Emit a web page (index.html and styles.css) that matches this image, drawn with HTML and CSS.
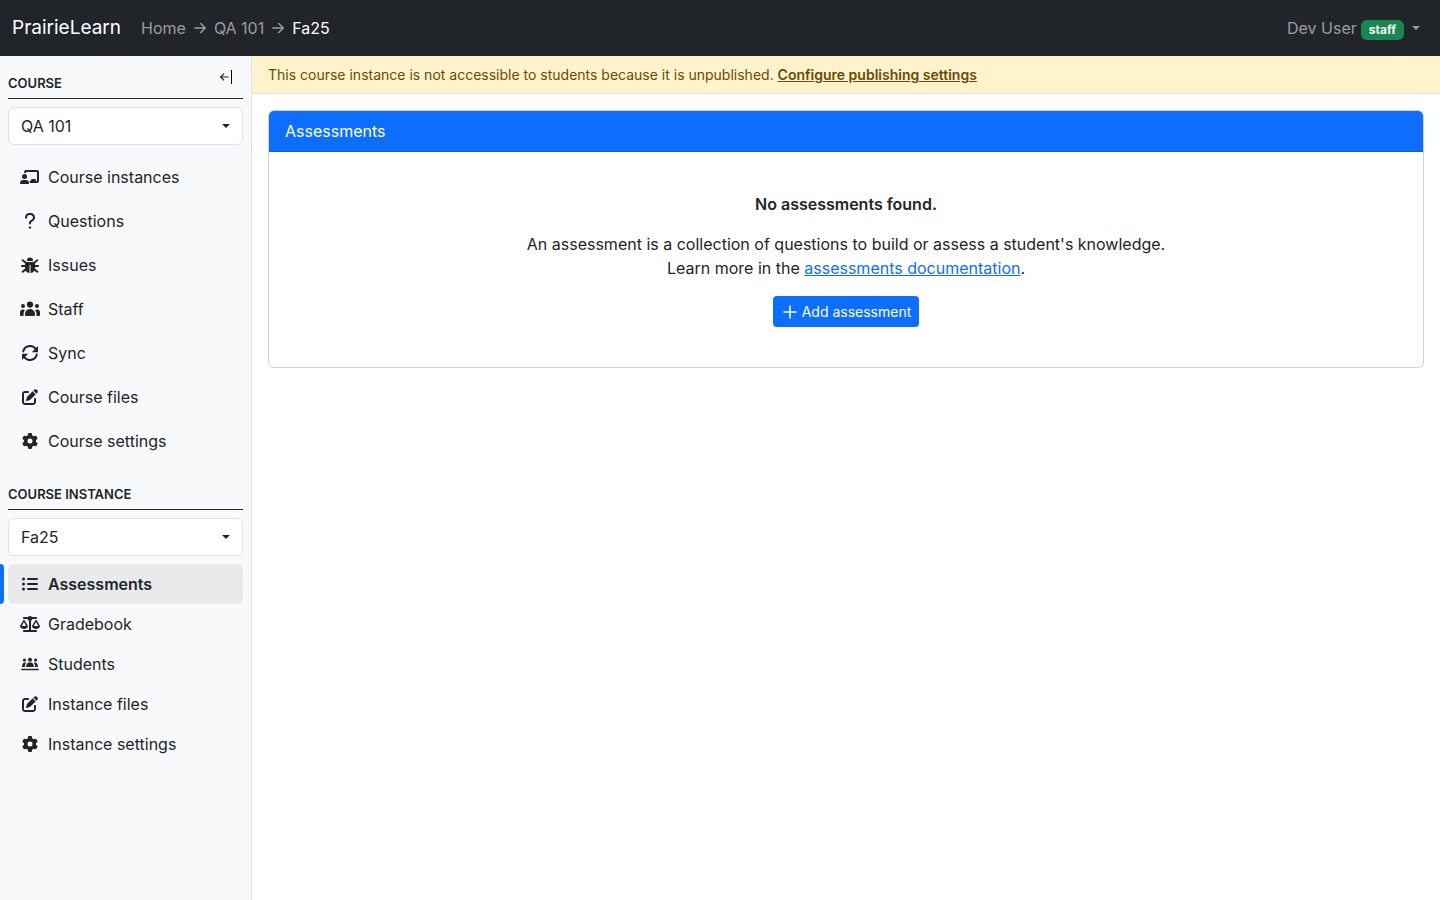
FILE: index.html
```html
<!DOCTYPE html>
<html lang="en">
<head>
<meta charset="utf-8">
<title>Assessments — Fa25, QA 101 | PrairieLearn</title>
<link rel="stylesheet" href="styles.css">
</head>
<body>
<svg class="sprite" aria-hidden="true">
  <symbol id="pen" viewBox="0 0 512 512"><path d="M471.6 21.7c-21.9-21.9-57.3-21.9-79.2 0L362.3 51.7l97.9 97.9 30.1-30.1c21.9-21.9 21.9-57.3 0-79.2L471.6 21.7zm-299.2 220c-6.1 6.1-10.8 13.6-13.5 21.9l-29.6 88.8c-2.9 8.6-.6 18.1 5.8 24.6s15.9 8.7 24.6 5.8l88.8-29.6c8.2-2.7 15.7-7.4 21.9-13.5L437.7 172.3 339.7 74.3 172.4 241.7zM96 64C43 64 0 107 0 160V416c0 53 43 96 96 96H352c53 0 96-43 96-96V320c0-17.7-14.3-32-32-32s-32 14.3-32 32v96c0 17.7-14.3 32-32 32H96c-17.7 0-32-14.3-32-32V160c0-17.7 14.3-32 32-32h96c17.7 0 32-14.3 32-32s-14.3-32-32-32H96z"/></symbol>
  <symbol id="gear" viewBox="0 0 512 512"><path d="M495.9 166.6c3.2 8.7 .5 18.4-6.4 24.6l-43.3 39.4c1.1 8.3 1.7 16.8 1.7 25.4s-.6 17.1-1.7 25.4l43.3 39.4c6.9 6.2 9.6 15.9 6.4 24.6c-4.4 11.9-9.7 23.3-15.8 34.3l-4.7 8.1c-6.6 11-14 21.4-22.1 31.2c-5.9 7.2-15.7 9.6-24.5 6.8l-55.7-17.7c-13.4 10.3-28.2 18.9-44 25.4l-12.5 57.1c-2 9.1-9 16.3-18.2 17.8c-13.8 2.3-28 3.5-42.5 3.5s-28.7-1.2-42.5-3.5c-9.2-1.5-16.2-8.7-18.2-17.8l-12.5-57.1c-15.8-6.5-30.6-15.1-44-25.4L83.1 425.9c-8.8 2.8-18.6 .3-24.5-6.8c-8.1-9.8-15.5-20.2-22.1-31.2l-4.7-8.1c-6.1-11-11.4-22.4-15.8-34.3c-3.2-8.7-.5-18.4 6.4-24.6l43.3-39.4C64.6 273.1 64 264.6 64 256s.6-17.1 1.7-25.4L22.4 191.2c-6.9-6.2-9.6-15.9-6.4-24.6c4.4-11.9 9.7-23.3 15.8-34.3l4.7-8.1c6.6-11 14-21.4 22.1-31.2c5.900-7.200 15.700-9.600 24.500-6.800l55.700 17.700c13.400-10.300 28.200-18.900 44-25.400l12.500-57.100c2-9.100 9-16.300 18.200-17.800C227.300 1.200 241.500 0 256 0s28.700 1.200 42.500 3.500c9.200 1.500 16.200 8.700 18.200 17.800l12.500 57.100c15.800 6.500 30.600 15.100 44 25.400l55.700-17.700c8.800-2.800 18.600-.3 24.500 6.800c8.100 9.800 15.500 20.200 22.100 31.200l4.700 8.100c6.100 11 11.400 22.400 15.800 34.300zM256 336a80 80 0 1 0 0-160 80 80 0 1 0 0 160z"/></symbol>
</svg>

<header class="topbar">
  <a class="brand" href="#">PrairieLearn</a>
  <nav class="crumbs" aria-label="Breadcrumb">
    <a href="#">Home</a>
    <svg class="crumb-arrow" viewBox="0 0 12 12"><path d="M.8 6h10.200M6.800 1.500 11.200 6 6.800 10.500"/></svg>
    <a href="#">QA 101</a>
    <svg class="crumb-arrow" viewBox="0 0 12 12"><path d="M.8 6h10.200M6.800 1.500 11.200 6 6.800 10.500"/></svg>
    <a class="current" href="#" aria-current="page">Fa25</a>
  </nav>
  <button class="user" type="button" aria-haspopup="true">Dev User <span class="badge">staff</span><span class="caret"></span></button>
</header>

<div class="layout">
  <aside class="sidebar">
    <div class="side-head">
      <h2 class="side-title">Course</h2>
      <button class="collapse" type="button" aria-label="Collapse side nav"><svg viewBox="0 0 14 16"><path class="thin" d="M9.500 8H2M5 4.600 1.600 8 5 11.400"/><path class="bar" d="M12.500 1v14"/></svg></button>
    </div>
    <div class="picker"><select aria-label="Course"><option>QA 101</option></select><span class="caret"></span></div>
    <nav class="menu roomy" aria-label="Course">
      <a href="#"><svg class="icon" viewBox="0 0 20 16"><circle cx="4.500" cy="7.500" r="2.500"/><path d="M3.400 11h2.200A3.400 3.400 0 0 1 9 14.400a.6.6 0 0 1-.6.6H.6a.6.6 0 0 1-.6-.6A3.400 3.400 0 0 1 3.400 11zM6 1h11a2 2 0 0 1 2 2v9a2 2 0 0 1-2 2h-6.800c-.2-.8-.6-1.400-1.200-2h2v-1a1 1 0 0 1 1-1h3a1 1 0 0 1 1 1v1h1V3H6v1.300A3.800 3.800 0 0 0 4 3.800V3a2 2 0 0 1 2-2z"/></svg>Course instances</a>
      <a href="#"><svg class="icon" viewBox="0 0 20 16"><path class="question" d="M6 4.800V4.400A3.400 3.400 0 0 1 9.400 1h1.200a3.400 3.400 0 0 1 1.900 6.200L10.800 8.400Q10 9 10 10v.6"/><circle cx="10" cy="14.600" r="1.200"/></svg>Questions</a>
      <a href="#"><svg class="icon" viewBox="0 0 20 16"><path d="M7 3.500a3 3 0 0 1 6 0 .5.500 0 0 1-.5.500h-5a.5.500 0 0 1-.5-.500z"/><path d="M7.500 5h5A2.500 2.500 0 0 1 15 7.500V11a5 5 0 0 1-4.500 4.900V8h-1v7.900A5 5 0 0 1 5 11V7.500A2.500 2.500 0 0 1 7.500 5z"/><path class="legs" d="m2.700 3.300 3.800 3M17.300 3.300l-3.800 3M2 9h4m12 0h-4M2.700 14.700l3.300-2.600M17.300 14.700 14 12.100"/></svg>Issues</a>
      <a href="#"><svg class="icon" viewBox="0 0 20 16"><circle cx="10" cy="3.600" r="3.100"/><circle cx="3" cy="5" r="2"/><circle cx="17" cy="5" r="2"/><path d="M10 8a5 5 0 0 1 5 5v1a1 1 0 0 1-1 1H6a1 1 0 0 1-1-1v-1a5 5 0 0 1 5-5zM3 8.500q1 0 1.900.5Q3.500 10.800 3.500 13v1q0 .5.200 1H1a1 1 0 0 1-1-1v-2.500a3 3 0 0 1 3-3zM17 8.500q-1 0-1.900.5 1.400 1.800 1.400 4v1q0 .5-.2 1H19a1 1 0 0 0 1-1v-2.500a3 3 0 0 0-3-3z"/></svg>Staff</a>
      <a href="#"><svg class="icon sync" viewBox="0 0 20 16"><path d="M3.200 6.500A7 7 0 0 1 15.500 3.600M16.800 9.500A7 7 0 0 1 4.500 12.400"/><path class="heads" d="M18 .9v5.600a.7.7 0 0 1-.7.700h-5.500zM2 15.100V9.500a.7.7 0 0 1 .7-.7h5.500z"/></svg>Sync</a>
      <a href="#"><svg class="icon"><use href="#pen"/></svg>Course files</a>
      <a href="#"><svg class="icon"><use href="#gear"/></svg>Course settings</a>
    </nav>
    <div class="side-head second"><h2 class="side-title">Course instance</h2></div>
    <div class="picker"><select aria-label="Course instance"><option>Fa25</option></select><span class="caret"></span></div>
    <nav class="menu" aria-label="Course instance">
      <a class="active" href="#" aria-current="page"><svg class="icon" viewBox="0 0 20 16"><circle cx="3.500" cy="3" r="1.500"/><circle cx="3.500" cy="8" r="1.500"/><circle cx="3.500" cy="13" r="1.500"/><path class="list-lines" d="M8 3h9M8 8h9M8 13h9"/></svg>Assessments</a>
      <a href="#"><svg class="icon" viewBox="0 0 640 512"><path d="M384 32H512c17.700 0 32 14.300 32 32s-14.300 32-32 32H398.400c-5.200 25.800-22.900 47.100-46.400 57.300V448H512c17.700 0 32 14.300 32 32s-14.300 32-32 32H128c-17.700 0-32-14.300-32-32s14.300-32 32-32H288V153.300c-23.500-10.300-41.200-31.600-46.400-57.300H128c-17.700 0-32-14.300-32-32s14.300-32 32-32H256c14.600-19.400 37.800-32 64-32s49.400 12.600 64 32zm55.600 288H584.400L512 195.800 439.600 320zM512 416c-62.900 0-115.200-34-126-78.900c-2.600-11 1-22.300 6.700-32.100l95.200-163.200c5-8.600 14.200-13.800 24.100-13.800s19.100 5.300 24.100 13.800l95.200 163.200c5.700 9.800 9.300 21.100 6.700 32.100C627.200 382 574.900 416 512 416zM126.800 195.800L54.400 320H199.300L126.800 195.800zM.9 337.100c-2.600-11 1-22.300 6.700-32.100l95.200-163.200c5-8.600 14.200-13.800 24.100-13.800s19.100 5.300 24.100 13.800l95.200 163.200c5.700 9.800 9.300 21.100 6.700 32.100C242 382 189.700 416 126.800 416S11.700 382 .9 337.100z"/></svg>Gradebook</a>
      <a href="#"><svg class="icon" viewBox="0 0 20 16"><circle cx="4.400" cy="4" r="1.600"/><circle cx="10" cy="3.800" r="2"/><circle cx="15.600" cy="4" r="1.600"/><path d="M2 11q.3-4.500 2.600-4.500h1.600Q5 8.200 4.800 11zM18 11q-.3-4.500-2.600-4.500h-1.600Q15 8.200 15.200 11zM6 11q.5-4.500 3-4.500h2q2.500 0 3 4.500z"/><path class="ground" d="M1.800 13.500h16.400"/></svg>Students</a>
      <a href="#"><svg class="icon"><use href="#pen"/></svg>Instance files</a>
      <a href="#"><svg class="icon"><use href="#gear"/></svg>Instance settings</a>
    </nav>
  </aside>

  <div class="content">
    <div class="notice">This course instance is not accessible to students because it is unpublished. <a href="#">Configure publishing settings</a></div>
    <main>
      <section class="card">
        <h1 class="card-head">Assessments</h1>
        <div class="card-body">
          <p class="strong">No assessments found.</p>
          <p>An assessment is a collection of questions to build or assess a student's knowledge.<br>Learn more in the <a href="#">assessments documentation</a>.</p>
          <button class="add" type="button"><svg viewBox="0 0 14 14"><path d="M7 1v12M1 7h12"/></svg>Add assessment</button>
        </div>
      </section>
    </main>
  </div>
</div>
</body>
</html>
```
FILE: styles.css
```css
* { box-sizing: border-box; }
body {
  margin: 0;
  min-height: 100vh;
  display: flex;
  flex-direction: column;
  font: 16px/24px Inter, "Liberation Sans", sans-serif;
  color: #212529;
  background: #fff;
}
button, select { font: inherit; color: inherit; }
svg { fill: currentColor; }
h1, h2, p { margin: 0; }
.sprite { display: none; }

.topbar {
  display: flex;
  align-items: center;
  height: 56px;
  padding: 0 20px 0 12px;
  background: #212529;
  color: #9b9d9f;
}
.topbar a { color: inherit; text-decoration: none; }
.topbar .brand { font-size: 19px; line-height: 30px; color: #fff; margin-right: 20px; }
.crumbs { display: flex; align-items: center; gap: 8px; flex: 1; }
.topbar .current { color: #fff; }
.crumb-arrow { width: 12px; height: 12px; fill: none; stroke: currentColor; stroke-width: 1.5; stroke-linecap: round; stroke-linejoin: round; }
.user { display: flex; align-items: center; padding: 0; border: 0; background: none; gap: 4px; }
.badge {
  padding: 4px 8px;
  margin-top: 3px;
  border-radius: 6px;
  background: #198754;
  color: #fff;
  font-size: 12px;
  line-height: 12px;
  font-weight: 700;
}
.caret { border: 4px solid transparent; border-top-color: currentColor; border-bottom: 0; }
.user .caret { margin-left: 4px; }

.layout { display: flex; flex: 1; }
.sidebar {
  flex: 0 0 252px;
  padding: 0 8px;
  background: #f8f9fb;
  border-right: 1px solid #dee2e6;
}
.side-head {
  display: flex;
  justify-content: space-between;
  height: 43px;
  padding: 13px 8px 0 0;
  margin-bottom: 8px;
  border-bottom: 1px solid #212529;
}
.side-head.second { margin-top: 6px; }
.side-title { padding-top: 4px; font-size: 13px; line-height: 20px; font-weight: 600; text-transform: uppercase; }
.collapse { width: 16px; height: 16px; padding: 0; border: 0; background: none; }
.collapse svg { display: block; width: 14px; height: 16px; fill: none; stroke: currentColor; }
.collapse .thin { stroke-width: 1.2; }
.collapse .bar { stroke-width: 1; stroke: #000; }

.picker { display: grid; align-items: center; }
.picker select {
  grid-area: 1 / 1;
  width: 100%;
  height: 38px;
  padding: 0 12px;
  border: 1px solid #dee2e6;
  border-radius: 6px;
  background: #fff;
  appearance: none;
}
.picker .caret { grid-area: 1 / 1; justify-self: end; margin-right: 13px; pointer-events: none; }

.menu { display: flex; flex-direction: column; margin-top: 8px; }
.menu a {
  display: flex;
  align-items: center;
  gap: 8px;
  padding: 8px 12px;
  border-radius: 6px;
  color: inherit;
  text-decoration: none;
}
.menu.roomy { margin-top: 12px; gap: 4px; }
.menu .icon { width: 20px; height: 16px; }
.menu a.active {
  position: relative;
  background: #e9eaec;
  font-weight: 600;
}
.menu a.active::before {
  content: "";
  position: absolute;
  top: 0;
  bottom: 0;
  left: -8px;
  width: 4px;
  border-radius: 0 4px 4px 0;
  background: #0d6efd;
}
.question, .legs, .list-lines, .ground, .sync { fill: none; stroke: currentColor; stroke-width: 2; stroke-linecap: round; }
.sync .heads { fill: currentColor; stroke: none; }
.ground { stroke-width: 1.5; }

.content { flex: 1; min-width: 0; }
.notice {
  padding: 8px 16px;
  border-bottom: 1px solid #dee2e6;
  background: #fff3cd;
  color: #664d03;
  font-size: 14px;
  line-height: 21px;
}
.notice a { color: inherit; font-weight: 600; }
main { padding: 16px; }
.card { border: 1px solid #d0d1d3; border-radius: 6px; overflow: hidden; }
.card-head {
  padding: 8px 16px;
  border-bottom: 1px solid #0b5cd6;
  background: #0d6efd;
  color: #fff;
  font-size: 16px;
  line-height: 24px;
  font-weight: 400;
}
.card-body { padding: 40px 16px; text-align: center; }
.card-body p { margin-bottom: 16px; }
.card-body a { color: #0d6efd; }
.strong { font-weight: 600; }
.add {
  display: inline-flex;
  align-items: center;
  gap: 5px;
  padding: 5px 8px 5px 10px;
  border: 0;
  border-radius: 4px;
  background: #0d6efd;
  color: #fff;
  font-size: 14px;
  line-height: 21px;
  vertical-align: top;
}
.add svg { width: 14px; height: 14px; fill: none; stroke: currentColor; stroke-width: 1.5; stroke-linecap: round; }
```
